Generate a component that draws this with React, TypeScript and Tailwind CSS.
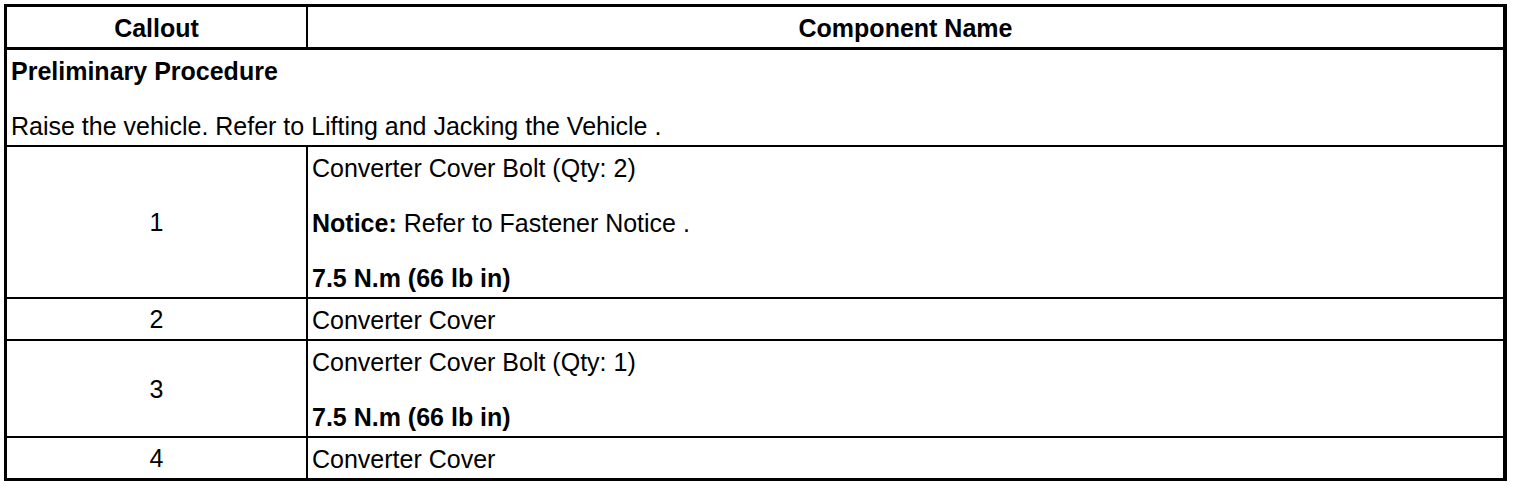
export default function App() {
  const font = "font-['Liberation_Sans',Arial,sans-serif]";
  const rightCell = "flex flex-col gap-[27px] px-1 pt-[7px] pb-[5px]";
  return (
    <div className={`min-h-[488px] bg-white ${font} text-[25px] leading-[28px] text-black`}>
      <div className="ml-1 pt-1">
        <div className="w-[1503px] border-[3px] border-r-4 border-black">
          {/* Header */}
          <div className="grid grid-cols-[301px_1fr] border-b-[3px] border-black font-bold">
            <div className="flex items-center justify-center border-r-2 border-black pt-[7px] pb-[5px]">
              Callout
            </div>
            <div className="flex items-center justify-center pt-[7px] pb-[5px]">Component Name</div>
          </div>
          {/* Preliminary */}
          <div className={`${rightCell} border-b-2 border-black`}>
            <p className="font-bold">Preliminary Procedure</p>
            <p>Raise the vehicle. Refer to Lifting and Jacking the Vehicle .</p>
          </div>
          {/* Row 1 */}
          <div className="grid grid-cols-[301px_1fr] border-b-2 border-black">
            <div className="flex items-center justify-center border-r-2 border-black">1</div>
            <div className={rightCell}>
              <p>Converter Cover Bolt (Qty: 2)</p>
              <p>
                <span className="font-bold">Notice:</span> Refer to Fastener Notice .
              </p>
              <p className="font-bold">7.5 N.m (66 lb in)</p>
            </div>
          </div>
          {/* Row 2 */}
          <div className="grid grid-cols-[301px_1fr] border-b-2 border-black">
            <div className="flex items-center justify-center border-r-2 border-black">2</div>
            <div className={rightCell}>
              <p>Converter Cover</p>
            </div>
          </div>
          {/* Row 3 */}
          <div className="grid grid-cols-[301px_1fr] border-b-2 border-black">
            <div className="flex items-center justify-center border-r-2 border-black">3</div>
            <div className={rightCell}>
              <p>Converter Cover Bolt (Qty: 1)</p>
              <p className="font-bold">7.5 N.m (66 lb in)</p>
            </div>
          </div>
          {/* Row 4 */}
          <div className="grid grid-cols-[301px_1fr]">
            <div className="flex items-center justify-center border-r-2 border-black">4</div>
            <div className={rightCell}>
              <p>Converter Cover</p>
            </div>
          </div>
        </div>
      </div>
    </div>
  );
}
